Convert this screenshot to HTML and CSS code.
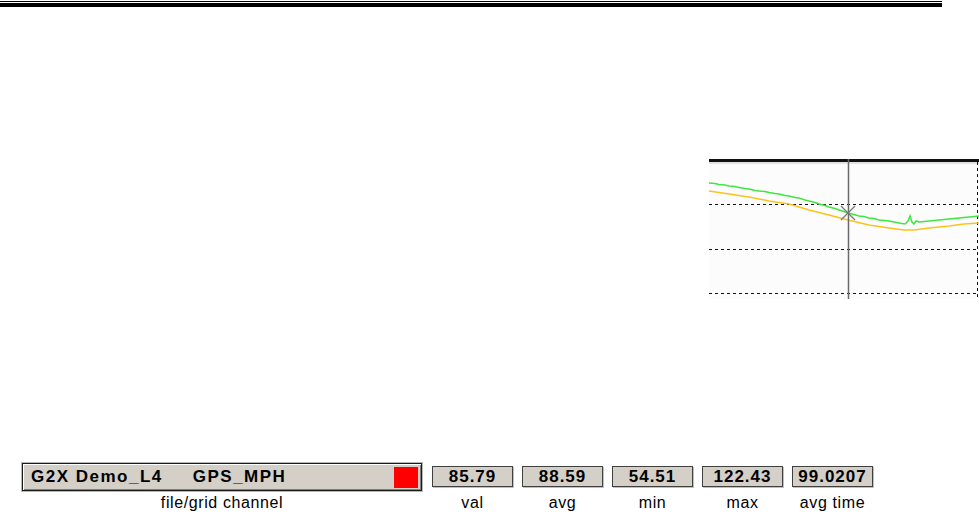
FILE: index.html
```html
<!DOCTYPE html>
<html lang="en">
<head>
    <meta charset="UTF-8">
    <title>G2X channel readout</title>
    <link rel="stylesheet" href="styles.css">
</head>
<body>
    <div class="rules">
        <div class="rule-thin"></div>
        <div class="rule-thick"></div>
    </div>

    <!-- trace window (right part only visible) -->
    <div class="chart">
        <svg width="270" height="140" viewBox="0 0 270 140">
            <rect x="0" y="0" width="270" height="140" fill="#fcfcfc"/>
            <line x1="0" y1="4" x2="270" y2="4" stroke="#c8c8c8" stroke-width="1"/>
            <rect x="0" y="0" width="270" height="3" fill="#111"/>
            <g stroke="#111" stroke-width="1" stroke-dasharray="3 3">
                <line x1="0" y1="45.5" x2="270" y2="45.5"/>
                <line x1="0" y1="90.5" x2="270" y2="90.5"/>
                <line x1="0" y1="134.5" x2="270" y2="134.5"/>
                <line x1="268.5" y1="3" x2="268.5" y2="140"/>
            </g>
            <polyline fill="none" stroke="#ffc21a" stroke-width="1.5"
                points="0,32 20,35 40,38 60,42 80,45 100,51 120,56 139,61 160,66 180,69 195,71 205,71 220,69 240,67 255,65 270,64"/>
            <polyline fill="none" stroke="#3ee83e" stroke-width="1.5"
                points="0,24 6,24.5 10,25.5 16,26 20,27 26,27.5 30,28.5 36,29.5 40,30 46,31.5 50,32 56,32.5 60,33.5 66,34.5 70,35 76,36.5 80,37 86,38.5 90,39 96,41 100,42 106,43.5 110,45 116,46.5 120,48 126,49.5 130,51 135,52.5 139,54 145,55.5 150,57 155,57.5 160,59 165,59.5 170,61 175,61.5 180,62 185,63 190,64 196,65 199,62 201,57 203,63 205,65 207,62 210,63 215,62.5 220,62 225,61.5 230,61 235,60.5 240,60 245,59.5 250,59 255,58.5 260,58 265,57.5 270,57"/>
            <line x1="139.5" y1="0" x2="139.5" y2="140" stroke="#6a6a6a" stroke-width="1.5"/>
            <g stroke="#777" stroke-width="1.3">
                <line x1="132" y1="47" x2="146" y2="61"/>
                <line x1="132" y1="61" x2="146" y2="47"/>
            </g>
        </svg>
    </div>

    <div class="readout">
        <div class="field field-channel">
            <div class="slot">
                <div class="channel-box">
                    <span class="channel-file">G2X Demo_L4</span>
                    <span class="channel-name">GPS_MPH</span>
                    <span class="channel-color"></span>
                </div>
            </div>
            <div class="field-label">file/grid channel</div>
        </div>
        <div class="field">
            <div class="slot"><div class="value-box">85.79</div></div>
            <div class="field-label">val</div>
        </div>
        <div class="field">
            <div class="slot"><div class="value-box">88.59</div></div>
            <div class="field-label">avg</div>
        </div>
        <div class="field">
            <div class="slot"><div class="value-box">54.51</div></div>
            <div class="field-label">min</div>
        </div>
        <div class="field">
            <div class="slot"><div class="value-box">122.43</div></div>
            <div class="field-label">max</div>
        </div>
        <div class="field">
            <div class="slot"><div class="value-box">99.0207</div></div>
            <div class="field-label">avg time</div>
        </div>
    </div>
</body>
</html>
```

FILE: styles.css
```css
body {
    margin: 0;
    background: #fff;
    font-family: "Liberation Sans", Arial, sans-serif;
    color: #000;
}
.rules {
    padding-top: 1px;
    width: 942px;
}
.rule-thin {
    height: 1px;
    background: #000;
    margin-bottom: 1px;
}
.rule-thick {
    height: 4px;
    background: #000;
}
.chart {
    margin: 152px 0 0 709px;
    width: 270px;
    height: 140px;
}
.chart svg {
    display: block;
}
.readout {
    display: flex;
    align-items: flex-start;
    gap: 9px;
    margin-top: 164px;
    padding-left: 22px;
}
.field {
    display: flex;
    flex-direction: column;
    align-items: center;
    width: 81px;
}
.field-channel {
    width: 400px;
    margin-right: 1px;
}
.slot {
    display: flex;
    align-items: center;
    justify-content: center;
    width: 100%;
    height: 28px;
}
.channel-box {
    display: flex;
    align-items: center;
    box-sizing: border-box;
    width: 400px;
    height: 28px;
    padding-left: 8px;
    padding-right: 3px;
    background: #d4d0c8;
    border: 1px solid #1a1a1a;
    box-shadow: 0 0 0 1px #b8b8b8, inset 1px 1px 0 #fff, inset -1px -1px 0 #808080;
    font-size: 17px;
    font-weight: bold;
    letter-spacing: 1.5px;
}
.channel-name {
    margin-left: 30px;
}
.channel-color {
    margin-left: auto;
    width: 24px;
    height: 21px;
    background: #ff0000;
}
.value-box {
    box-sizing: border-box;
    width: 81px;
    height: 21px;
    margin-bottom: 2px;
    background: #d4d0c8;
    border: 1px solid #404040;
    box-shadow: 1px 1px 0 #c0c0c0;
    text-align: center;
    line-height: 19px;
    font-size: 17px;
    font-weight: bold;
    letter-spacing: 1px;
}
.field-label {
    margin-top: 3px;
    font-size: 16px;
    line-height: 18px;
    letter-spacing: 0.6px;
    white-space: nowrap;
}
```
